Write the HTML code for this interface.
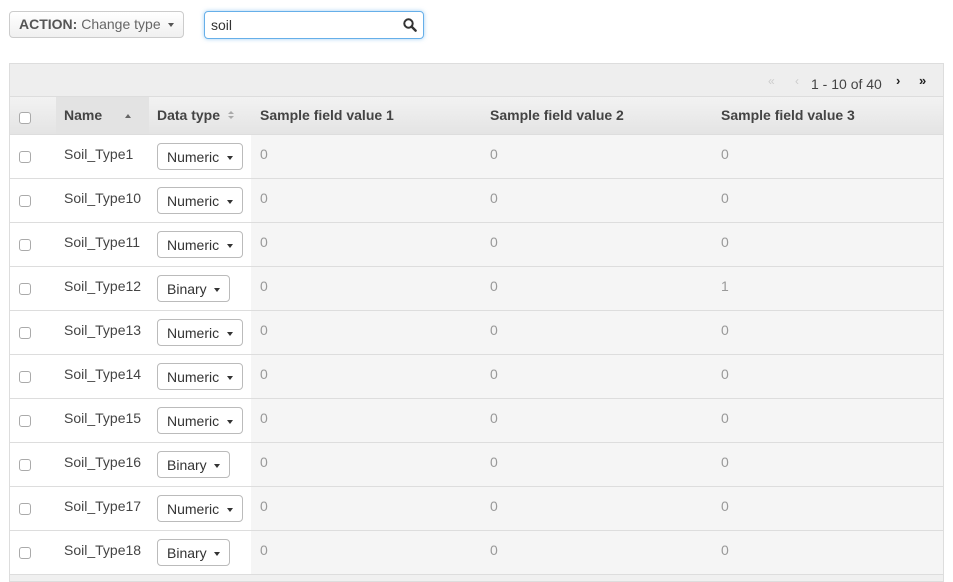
<!DOCTYPE html>
<html><head><style>
*{box-sizing:border-box;margin:0;padding:0}
body{width:953px;height:582px;background:#fff;font-family:"Liberation Sans",Arial,sans-serif;font-size:14px;color:#444;position:relative;overflow:hidden}
.abs{position:absolute}
.btn{position:absolute;border:1px solid #ccc;border-radius:4px;background:linear-gradient(#fff,#f0f0f0);color:#333}
.caret{display:inline-block;width:0;height:0;border-left:3.5px solid transparent;border-right:3.5px solid transparent;border-top:4px solid #333;vertical-align:middle}
.cb{position:absolute;width:12px;height:12px;border:1px solid #aaa;border-radius:3px;background:#fff;left:19px}
.row{position:absolute;left:10px;width:933px;height:44px;border-bottom:1px solid #ddd;background:#f5f5f5}
.row .w{position:absolute;left:0;top:0;width:241px;height:43px;background:#fff}
.row .n{position:absolute;left:54px;top:11px;color:#444}
.row .v{position:absolute;top:11px;color:#999}
.sel{position:absolute;left:147px;top:8px;height:27px;padding:0 9px;line-height:26px;border:1px solid #bbb;border-radius:4px;background:#fff;color:#333}
</style></head><body>
<div class="btn" style="left:9px;top:11px;width:175px;height:27px;line-height:25px;padding-left:9px;font-size:14px;color:#666"><b style="color:#555">ACTION:</b> Change type &nbsp;<span class="caret" style="border-top-color:#555"></span></div>
<div class="abs" style="left:204px;top:11px;width:220px;height:28px;border:1px solid #66afe9;border-radius:4px;box-shadow:0 0 4px rgba(102,175,233,.6);padding-left:6px;line-height:26px;color:#333">soil
<svg class="abs" style="right:6px;top:6px" width="14" height="14" viewBox="0 0 14 14"><circle cx="5.5" cy="5.5" r="4.2" fill="none" stroke="#333" stroke-width="2"/><path d="M8.6 8.6L12.6 12.6" stroke="#333" stroke-width="2.4" stroke-linecap="round"/></svg></div>
<div class="abs" style="left:9px;top:63px;width:935px;height:519px;border:1px solid #ddd;background:#f0f0f0"></div>
<div class="abs" style="left:10px;top:64px;width:933px;height:33px;background:#eee;border-bottom:1px solid #ddd"></div>
<div class="abs" style="left:768px;top:74px;font-size:12px;color:#ccc">«</div>
<div class="abs" style="left:795px;top:74px;font-size:12px;color:#ccc">‹</div>
<div class="abs" style="left:811px;top:76px;font-size:14px;color:#444">1 - 10 of 40</div>
<div class="abs" style="left:896px;top:73px;font-size:13px;font-weight:bold;color:#222">›</div>
<div class="abs" style="left:919px;top:73px;font-size:13px;font-weight:bold;color:#222">»</div>
<div class="abs" style="left:10px;top:97px;width:933px;height:38px;background:linear-gradient(#f2f2f2,#e4e4e4);border-bottom:1px solid #ddd"></div>
<div class="abs" style="left:56px;top:97px;width:93px;height:37px;background:#e3e3e3"></div>
<div class="cb" style="top:112px"></div>
<div class="abs" style="left:64px;top:107px;font-weight:bold;color:#444">Name</div>
<div class="abs" style="left:125px;top:114px;width:0;height:0;border-left:3px solid transparent;border-right:3px solid transparent;border-bottom:4px solid #666"></div>
<div class="abs" style="left:157px;top:107px;font-weight:bold;color:#444">Data type</div>
<div class="abs" style="left:228px;top:111px;width:0;height:0;border-left:3px solid transparent;border-right:3px solid transparent;border-bottom:3px solid #aaa"></div>
<div class="abs" style="left:228px;top:116px;width:0;height:0;border-left:3px solid transparent;border-right:3px solid transparent;border-top:3px solid #aaa"></div>
<div class="abs" style="left:260px;top:107px;font-weight:bold;color:#444">Sample field value 1</div>
<div class="abs" style="left:490px;top:107px;font-weight:bold;color:#444">Sample field value 2</div>
<div class="abs" style="left:721px;top:107px;font-weight:bold;color:#444">Sample field value 3</div>

<div class="row" style="top:135px"><div class="w"></div><div class="cb" style="left:9px;top:16px"></div><div class="n">Soil_Type1</div><div class="sel">Numeric &nbsp;<span class="caret"></span></div><div class="v" style="left:250px">0</div><div class="v" style="left:480px">0</div><div class="v" style="left:711px">0</div></div>
<div class="row" style="top:179px"><div class="w"></div><div class="cb" style="left:9px;top:16px"></div><div class="n">Soil_Type10</div><div class="sel">Numeric &nbsp;<span class="caret"></span></div><div class="v" style="left:250px">0</div><div class="v" style="left:480px">0</div><div class="v" style="left:711px">0</div></div>
<div class="row" style="top:223px"><div class="w"></div><div class="cb" style="left:9px;top:16px"></div><div class="n">Soil_Type11</div><div class="sel">Numeric &nbsp;<span class="caret"></span></div><div class="v" style="left:250px">0</div><div class="v" style="left:480px">0</div><div class="v" style="left:711px">0</div></div>
<div class="row" style="top:267px"><div class="w"></div><div class="cb" style="left:9px;top:16px"></div><div class="n">Soil_Type12</div><div class="sel">Binary &nbsp;<span class="caret"></span></div><div class="v" style="left:250px">0</div><div class="v" style="left:480px">0</div><div class="v" style="left:711px">1</div></div>
<div class="row" style="top:311px"><div class="w"></div><div class="cb" style="left:9px;top:16px"></div><div class="n">Soil_Type13</div><div class="sel">Numeric &nbsp;<span class="caret"></span></div><div class="v" style="left:250px">0</div><div class="v" style="left:480px">0</div><div class="v" style="left:711px">0</div></div>
<div class="row" style="top:355px"><div class="w"></div><div class="cb" style="left:9px;top:16px"></div><div class="n">Soil_Type14</div><div class="sel">Numeric &nbsp;<span class="caret"></span></div><div class="v" style="left:250px">0</div><div class="v" style="left:480px">0</div><div class="v" style="left:711px">0</div></div>
<div class="row" style="top:399px"><div class="w"></div><div class="cb" style="left:9px;top:16px"></div><div class="n">Soil_Type15</div><div class="sel">Numeric &nbsp;<span class="caret"></span></div><div class="v" style="left:250px">0</div><div class="v" style="left:480px">0</div><div class="v" style="left:711px">0</div></div>
<div class="row" style="top:443px"><div class="w"></div><div class="cb" style="left:9px;top:16px"></div><div class="n">Soil_Type16</div><div class="sel">Binary &nbsp;<span class="caret"></span></div><div class="v" style="left:250px">0</div><div class="v" style="left:480px">0</div><div class="v" style="left:711px">0</div></div>
<div class="row" style="top:487px"><div class="w"></div><div class="cb" style="left:9px;top:16px"></div><div class="n">Soil_Type17</div><div class="sel">Numeric &nbsp;<span class="caret"></span></div><div class="v" style="left:250px">0</div><div class="v" style="left:480px">0</div><div class="v" style="left:711px">0</div></div>
<div class="row" style="top:531px"><div class="w"></div><div class="cb" style="left:9px;top:16px"></div><div class="n">Soil_Type18</div><div class="sel">Binary &nbsp;<span class="caret"></span></div><div class="v" style="left:250px">0</div><div class="v" style="left:480px">0</div><div class="v" style="left:711px">0</div></div>
</body></html>
